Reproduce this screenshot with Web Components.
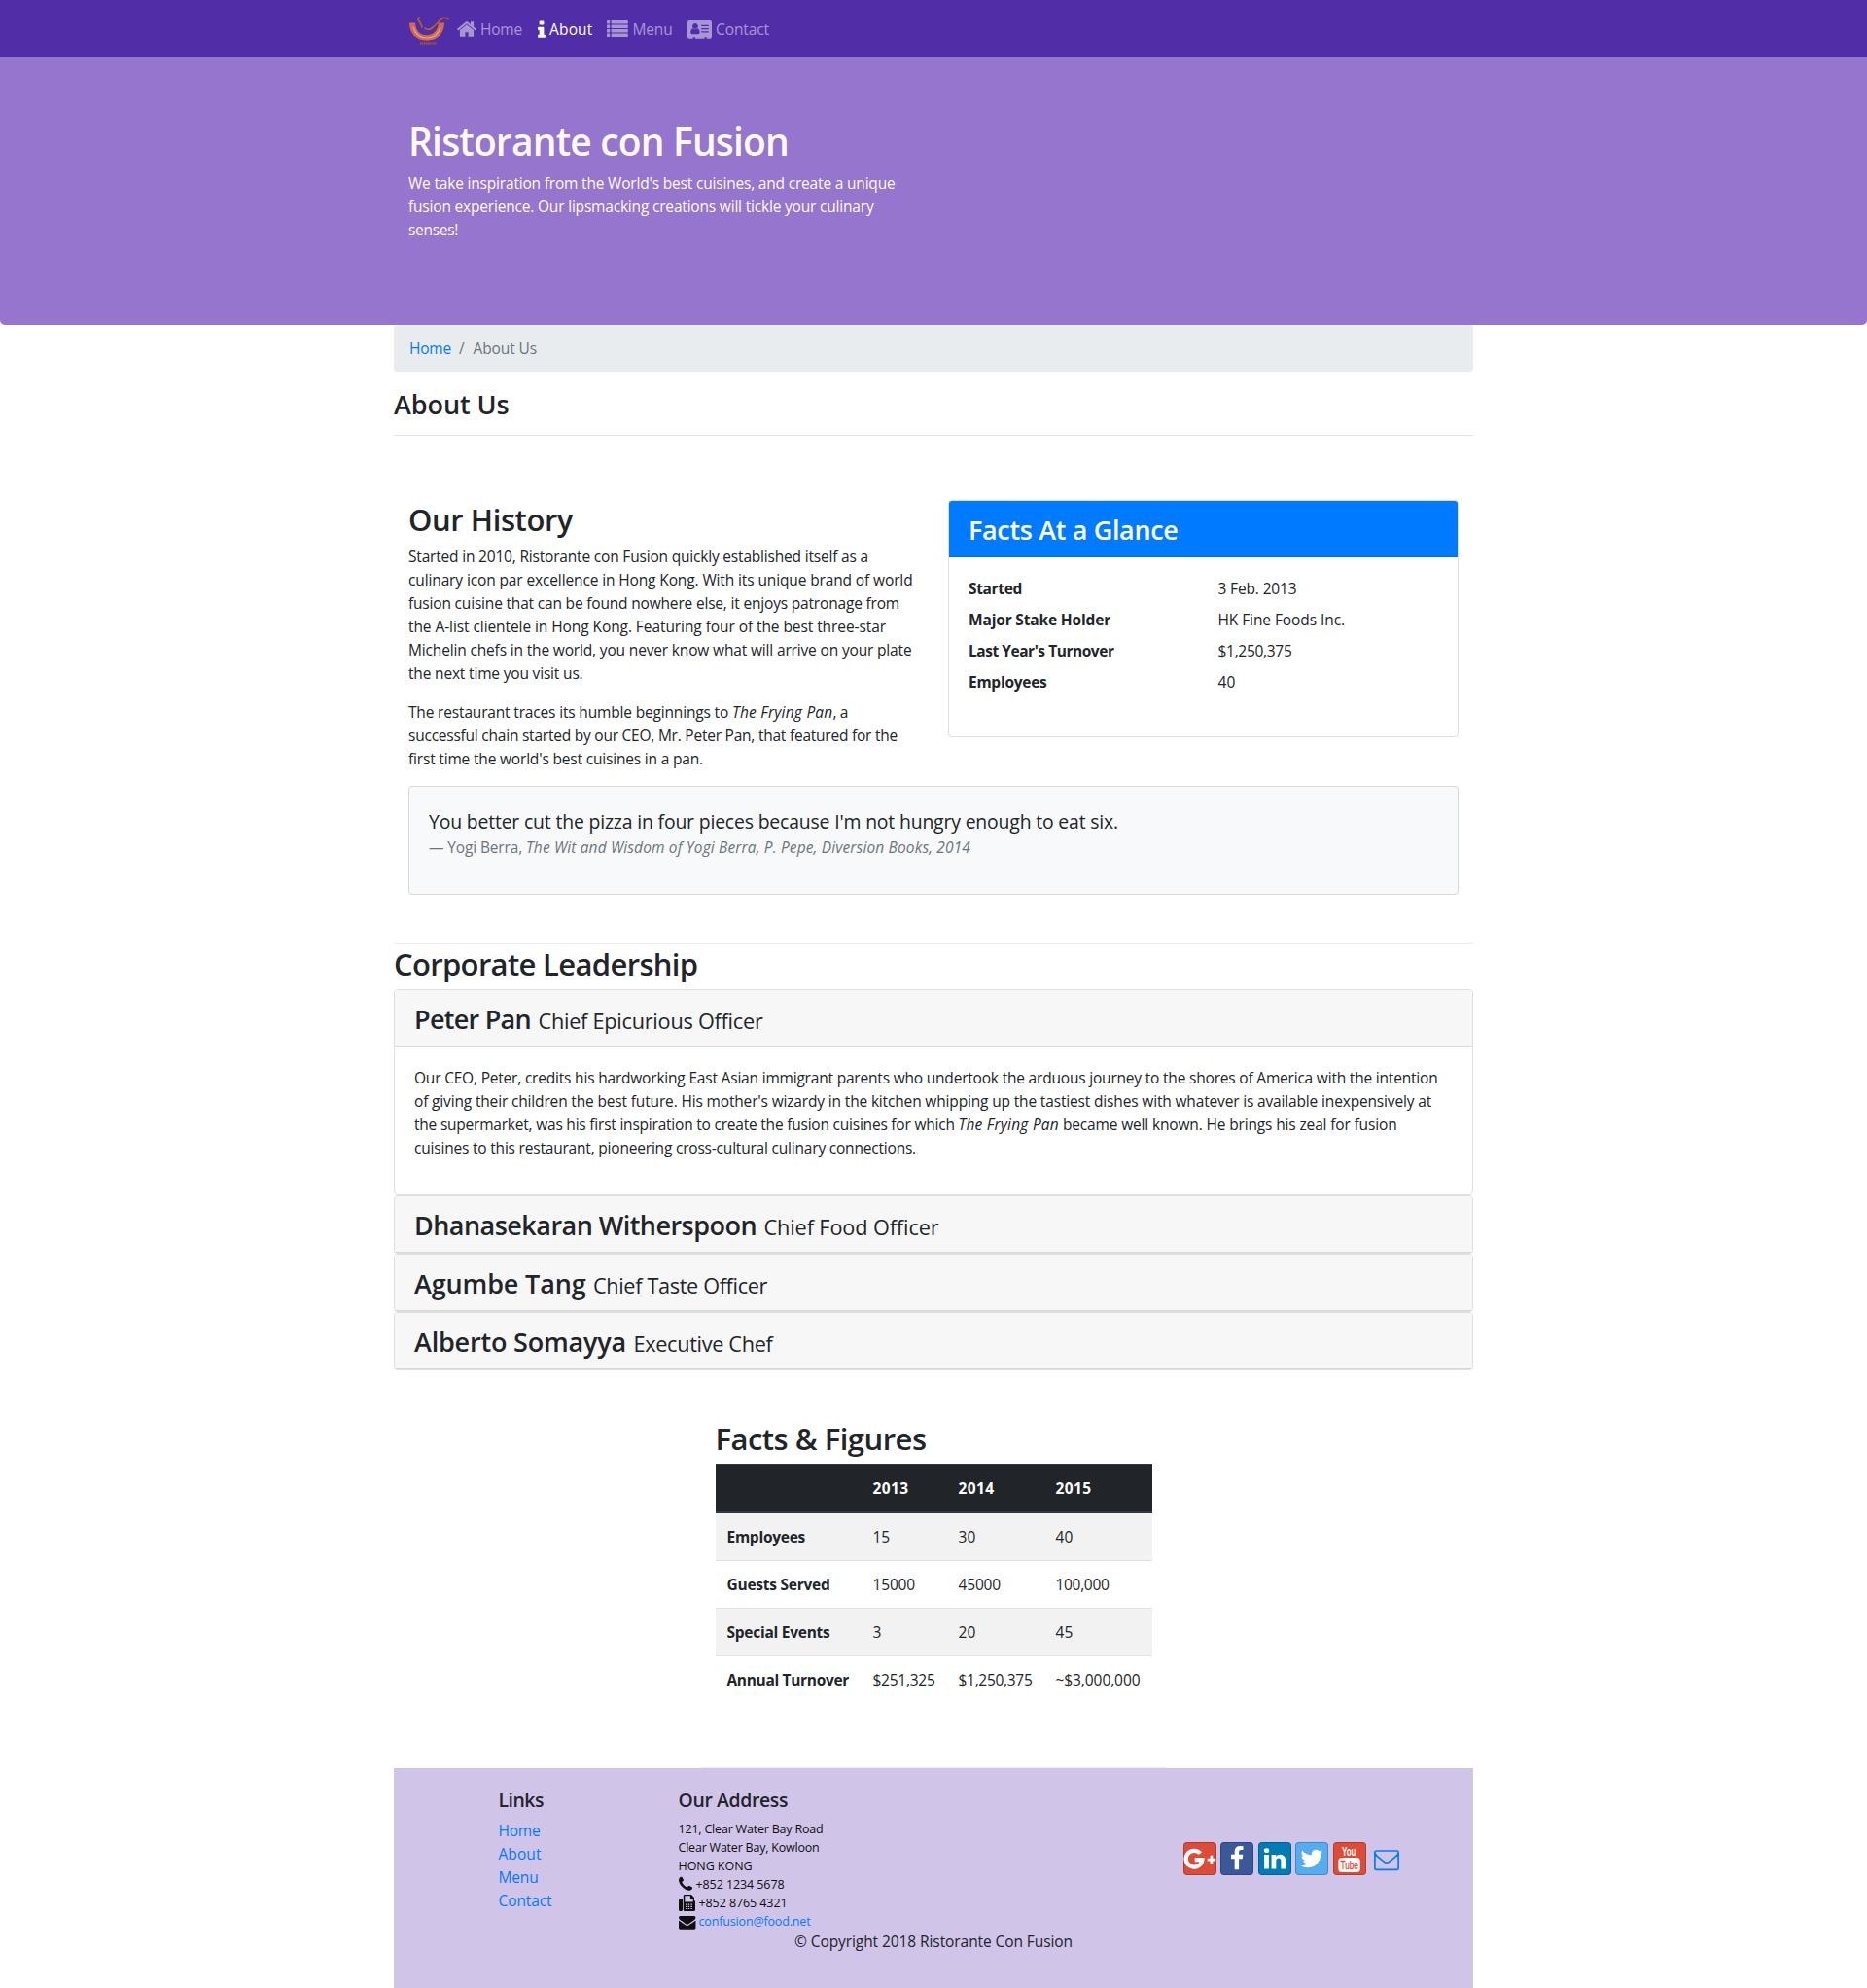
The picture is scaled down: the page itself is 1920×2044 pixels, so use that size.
<!DOCTYPE html>
<html lang="en">
<head>
<meta charset="utf-8">
<title>Ristorante Con Fusion: About Us</title>
<style>
html,body{margin:0;padding:0}
body{background:#fff;color:#212529;font:400 15.5px/24px "Open Sans","Noto Sans",sans-serif;height:2044px;overflow:hidden}
</style>
</head>
<body>
<about-page></about-page>
<script>
const base = `
*{box-sizing:border-box}
h1,h2,h3,h5,p,ul,dl,dd,dt,table{margin:0;padding:0}
h2,h3,h5{font-weight:600}
h2{font-size:31px;line-height:38px;height:38px;padding-top:1px;margin-bottom:8px}
h3{font-size:27px;line-height:33px}
p{margin-bottom:16px}
a{color:#007bff;text-decoration:none}
fit-text.line,.mixed{display:block}
.mixed{display:flex}
`;
function element(name, css, html) {
  customElements.define(name, class extends HTMLElement {
    constructor() {
      super();
      this.attachShadow({mode: 'open'}).innerHTML = `<style>${base}${css}</style>${html}`;
    }
  });
}

const icons = {
  home: ['0 0 1792 1792', '<path d="M1472 992v480q0 26-19 45t-45 19h-384v-384h-256v384h-384q-26 0-45-19t-19-45v-480q0-1 .5-3t.5-3l575-474 575 474q1 2 1 6zm223-69l-62 74q-8 9-21 11h-3q-13 0-21-7l-692-577-692 577q-12 8-24 7-13-2-21-11l-62-74q-8-10-7-23.5t11-21.5l719-599q32-26 76-26t76 26l244 204v-195q0-14 9-23t23-9h192q14 0 23 9t9 23v408l219 182q10 8 11 21.5t-7 23.5z"/>'],
  info: ['576 0 640 1792', '<path d="M1216 1344v128q0 26-19 45t-45 19h-512q-26 0-45-19t-19-45v-128q0-26 19-45t45-19h64v-384h-64q-26 0-45-19t-19-45v-128q0-26 19-45t45-19h384q26 0 45 19t19 45v576h64q26 0 45 19t19 45zm-128-1152v192q0 26-19 45t-45 19h-256q-26 0-45-19t-19-45v-192q0-26 19-45t45-19h256q26 0 45 19t19 45z"/>'],
  list: ['0 0 22 17', [0, 4.5, 9, 13.5].map(y => `<rect y="${y}" width="3.2" height="3.4" rx=".4"/><rect x="4.6" y="${y}" width="17.2" height="3.4" rx=".4"/>`).join('')],
  card: ['0 0 25 19', '<path fill-rule="evenodd" d="M2 0h21a2 2 0 0 1 2 2v14.7a2 2 0 0 1-2 2h-3.200v-1.500h-2.400v1.500H8v-1.500H5.600v1.500H2a2 2 0 0 1-2-2V2a2 2 0 0 1 2-2zM3.300 12.500q0 1.700 1.400 1.700h6.500q1.400 0 1.400-1.700c0-2.200-.6-4-2.300-4-1 .9-3.700.9-4.700 0-1.700 0-2.300 1.800-2.300 4zM7.950 3.100a2.900 2.900 0 0 0-2.200 4.800c1.200 1.200 3.200 1.200 4.400 0A2.900 2.900 0 0 0 7.950 3.100zM14.200 4.700v1.200h7.600V4.700zM14.200 8v1.200h7.600V8zM14.200 11.300v1.200h7.600v-1.200z"/>'],
  phone: ['192 256 1408 1408', '<path d="M1600 1240q0 27-10 70.5t-21 68.5q-21 50-122 106-94 51-186 51-27 0-52.500-3.500t-57.500-12.500-47.500-14.500-55.500-20.500-49-18q-98-35-175-83-128-79-264.500-215.500t-215.500-264.500q-48-77-83-175-3-9-18-49t-20.500-55.500-14.500-47.500-12.500-57.500-3.500-52.500q0-92 51-186 56-101 106-122 25-11 68.500-21t70.500-10q14 0 21 3 18 6 53 76 11 19 30 54t35 63.500 31 53.500q3 4 17.500 25t21.500 35.500 7 28.500q0 20-28.500 50t-62 55-62 53-28.500 46q0 9 5 22.500t8.500 20.500 14 24 11.500 19q76 137 174 235t235 174q2 1 19 11.500t24 14 20.500 8.500 22.500 5q18 0 46-28.500t53-62 55-62 50-28.500q14 0 28.500 7t35.500 21.500 25 17.500q25 15 53.500 31t63.500 35 54 30q70 35 76 53 3 7 3 21z"/>'],
  fax: ['0 0 17 17', '<path fill-rule="evenodd" d="M1.500 4h1.300a1.200 1.200 0 0 1 1.200 1.200v10.300A1.500 1.500 0 0 1 2.500 17h-1A1.500 1.500 0 0 1 0 15.500v-10A1.500 1.500 0 0 1 1.500 4zM6 0h7l3 3v3a1.500 1.500 0 0 1 1 1.500v8a1.500 1.500 0 0 1-1.500 1.500H6.300A1.500 1.500 0 0 1 4.800 15.500V1.200A1.200 1.200 0 0 1 6 0zM6.300 1.300v6.200h8.400V4.200h-2.800V1.300zM7 9.500v1.200h1.500V9.500zm2.700 0v1.200h1.500V9.500zm2.700 0v1.200h1.500V9.500zM7 11.700v1.200h1.500v-1.200zm2.700 0v1.200h1.500v-1.200zm2.700 0v1.200h1.500v-1.200zM7 13.900v1.200h1.500v-1.200zm2.700 0v1.200h1.500v-1.200zm2.700 0v1.200h1.500v-1.200z"/>'],
  mail: ['0 256 1792 1408', '<path d="M1792 710v794q0 66-47 113t-113 47h-1472q-66 0-113-47t-47-113v-794q44 49 101 87 362 246 497 345 57 42 92.500 65.500t94.500 48 110 24.500h2q51 0 110-24.500t94.500-48 92.500-65.500q170-123 498-345 57-39 100-87zm0-294q0 79-49 151t-122 123q-376 261-468 325-10 7-42.500 31t-54 38.500-52 32.500-57.500 27-50 9h-2q-23 0-50-9t-57.500-27-52-32.500-54-38.500-42.500-31q-91-64-262-182.500t-205-142.500q-62-42-117-115.500t-55-136.500q0-78 41.500-130t118.500-52h1472q65 0 112.500 47t47.500 113z"/>'],
  envelope: ['0 0 27 22', '<path fill="none" stroke="currentColor" stroke-width="1.700" stroke-linejoin="round" d="M2.400 1h21.200a1.500 1.500 0 0 1 1.500 1.500v16.400a1.500 1.500 0 0 1-1.500 1.500H2.400A1.500 1.500 0 0 1 .9 18.900V2.500A1.500 1.500 0 0 1 2.400 1zM1 3.200c.6 2 2 3.200 3.600 4.400l5.600 4.500c1.900 1.500 3.700 1.500 5.600 0l5.600-4.500C23 6.400 24.400 5.200 25 3.200"/>'],
  google: ['0 0 34 34', '<path fill="none" stroke="#fff" stroke-width="4.200" d="M17.400 11.700A8.400 8.400 0 1 0 19.400 18.200H11.700"/><path d="M27.600 13.800h2.700v2.900h3v2.700h-3v2.900h-2.700v-2.900h-2.900v-2.700h2.900z"/>'],
  facebook: ['0 0 1792 1792', '<path d="M1343 12v264h-157q-86 0-116 36t-30 108v189h293l-39 296h-254v759h-306v-759h-255v-296h255v-218q0-186 104-288.500t277-102.500q147 0 228 12z"/>'],
  linkedin: ['0 0 1792 1792', '<path d="M477 625v991h-330v-991h330zm21-306q1 73-50.500 122t-135.500 49h-2q-82 0-132-49t-50-122q0-74 51.500-122.500t134.500-48.500 133 48.500 51 122.500zm1166 729v568h-329v-530q0-105-40.500-164.500t-126.500-59.500q-63 0-105.500 34.500t-63.500 85.500q-11 30-11 81v553h-329q2-399 2-647t-1-296l-1-48h329v144h-2q20-32 41-56t56.500-52 87-43.500 114.500-15.500q171 0 275 113.500t104 332.500z"/>'],
  twitter: ['0 0 1792 1792', '<path d="M1684 408q-67 98-162 167 1 14 1 42 0 130-38 259.500t-115.500 248.500-184.500 210.500-258 146-323 54.500q-271 0-496-145 35 4 78 4 225 0 401-138-105-2-188-64.500t-114-159.500q33 5 61 5 43 0 85-11-112-23-185.500-111.500t-73.500-205.500v-4q68 38 146 41-66-44-105-115t-39-154q0-88 44-163 121 149 294.500 238.500t371.500 99.500q-8-38-8-74 0-134 94.500-228.500t228.500-94.500q140 0 236 102 109-21 205-78-37 115-142 178 93-10 186-50z"/>'],
  youtube: ['0 0 34 34', '<g font-family="Liberation Sans Narrow, Liberation Sans" font-size="12.200"><text x="9" y="13.900" font-weight="700" textLength="14.500" lengthAdjust="spacingAndGlyphs">You</text><rect x="5.400" y="16" width="22.400" height="15" rx="3.500"/><text x="7.500" y="28.400" font-weight="400" fill="#dd4b39" stroke="#dd4b39" stroke-width=".3" textLength="18.400" lengthAdjust="spacingAndGlyphs">Tube</text></g>'],
  logo: ['0 0 41 30', '<path fill="#d06a55" d="M0 6.500h6c.6 8.500 5 12.700 11.500 12.700S29.300 15 30 6.500h6C35.800 17.500 29 24.700 18 24.700S.2 17.500 0 6.500z"/><path fill="none" stroke="#e5a766" stroke-width="1.200" d="M4 11c2 7.500 7 11 14 11s12-3.500 14-11"/><path fill="none" stroke="#ad6430" stroke-width="1.700" stroke-linecap="round" d="M10.500 1c-2 1.500-1.800 3.500.3 4.700L13 11M40 2.600C36 .3 33.500 1 30.500 5L25 10.500q-5.500 5-9 1.500"/><path stroke="#a9553f" stroke-width="2.600" stroke-dasharray="1.400 .5" stroke-opacity=".85" d="M11 27.500h17"/>']
};
customElements.define('ui-icon', class extends HTMLElement {
  connectedCallback() {
    const [box, body] = icons[this.getAttribute('name')];
    const root = this.shadowRoot || this.attachShadow({mode: 'open'});
    root.innerHTML = `<style>:host{display:inline-block;flex:none}svg{display:block;width:100%;height:100%;overflow:visible}</style><svg viewBox="${box}" fill="currentColor" aria-hidden="true">${body}</svg>`;
  }
});

element('nav-link', `
:host{display:flex;align-items:flex-start;color:rgba(255,255,255,.5);height:24px}
:host([active]){color:#fff}
`, `<slot></slot>`);

element('site-nav', `
:host{display:block;background:#512da8;height:59px}
nav{width:1110px;margin:0 auto;padding:18px 16px 0;display:flex;align-items:flex-start}
.logo{width:41px;height:30px;margin:-1px 8px 0 0}
`, `<nav>
<ui-icon class="logo" name="logo"></ui-icon>
<nav-link style="width:83px"><ui-icon name="home" style="width:22px;height:22px;margin:1px 3px 0 -1px"></ui-icon><fit-text w="43">Home</fit-text></nav-link>
<nav-link active style="width:71px"><ui-icon name="info" style="width:8px;height:22px;margin:2px 4px 0 0"></ui-icon><fit-text w="44.500">About</fit-text></nav-link>
<nav-link style="width:83px"><ui-icon name="list" style="width:22px;height:17px;margin:3px 4.500px 0 0"></ui-icon><fit-text w="41">Menu</fit-text></nav-link>
<nav-link><ui-icon name="card" style="width:25px;height:19px;margin:3px 4px 0 0"></ui-icon><fit-text w="55">Contact</fit-text></nav-link>
</nav>`);

element('site-hero', `
:host{display:block;background:#9575cd;color:floralwhite;height:275px;border-radius:0 0 5px 5px}
div{width:1110px;margin:0 auto;padding:62px 15px 0}
h1{font-size:39px;line-height:48px;font-weight:600;margin-bottom:7px}
`, `<div><h1><fit-text w="391">Ristorante con Fusion</fit-text></h1>
<p><fit-text class="line" w="500.500">We take inspiration from the World's best cuisines, and create a unique</fit-text>
<fit-text class="line" w="478.500">fusion experience. Our lipsmacking creations will tickle your culinary</fit-text>
<fit-text class="line" w="51">senses!</fit-text></p></div>`);

element('bread-crumb', `
:host{display:flex;background:#e9ecef;border-radius:4px;height:48px;padding:12px 16px;color:#6c757d}
span{width:22.500px;padding-left:8px}
`, `<a><fit-text w="43">Home</fit-text></a><span>/</span><fit-text w="65.500">About Us</fit-text>`);

element('page-title', `
:host{display:block;padding-top:17px}
h3{height:49px;border-bottom:1px solid #e5e5e5}
`, `<h3><slot></slot></h3>`);

element('our-history', `:host{display:block;width:540px}`, `
<h2><fit-text w="169">Our History</fit-text></h2>
<p><fit-text class="line" w="473">Started in 2010, Ristorante con Fusion quickly established itself as a</fit-text>
<fit-text class="line" w="518.500">culinary icon par excellence in Hong Kong. With its unique brand of world</fit-text>
<fit-text class="line" w="505">fusion cuisine that can be found nowhere else, it enjoys patronage from</fit-text>
<fit-text class="line" w="491">the A-list clientele in Hong Kong. Featuring four of the best three-star</fit-text>
<fit-text class="line" w="517.500">Michelin chefs in the world, you never know what will arrive on your plate</fit-text>
<fit-text class="line" w="179.500">the next time you visit us.</fit-text></p>
<p><span class="mixed"><fit-text w="333">The restaurant traces its humble beginnings to </fit-text><em><fit-text w="103.500">The Frying Pan</fit-text></em><fit-text w="15.500">, a</fit-text></span>
<fit-text class="line" w="503">successful chain started by our CEO, Mr. Peter Pan, that featured for the</fit-text>
<fit-text class="line" w="303">first time the world's best cuisines in a pan.</fit-text></p>`);

element('facts-card', `
:host{display:block;width:525px;height:244px;border:1px solid rgba(0,0,0,.125);border-radius:4px;margin-left:15px}
h3{background:#007bff;color:#fff;padding:13px 20px 11px;border-bottom:1px solid #006ddf;border-radius:3px 3px 0 0}
dl{padding:20px;display:grid;grid-template-columns:256.500px 1fr;row-gap:8px}
dt{font-weight:700}
`, `<h3><fit-text w="215.500">Facts At a Glance</fit-text></h3>
<dl><dt><fit-text w="55">Started</fit-text></dt><dd><fit-text w="81">3 Feb. 2013</fit-text></dd>
<dt><fit-text w="146">Major Stake Holder</fit-text></dt><dd><fit-text w="130.500">HK Fine Foods Inc.</fit-text></dd>
<dt><fit-text w="149.500">Last Year's Turnover</fit-text></dt><dd><fit-text w="76">$1,250,375</fit-text></dd>
<dt><fit-text w="80.500">Employees</fit-text></dt><dd><fit-text w="18">40</fit-text></dd></dl>`);

element('quote-card', `
:host{display:block;height:112px;border:1px solid rgba(0,0,0,.125);border-radius:4px;background:#f8f9fa;padding:21px 20px 0}
.q{font-size:19.400px;line-height:30px;height:29px}
.by{color:#6c757d}
`, `<fit-text class="line q" w="709">You better cut the pizza in four pieces because I'm not hungry enough to eat six.</fit-text>
<div class="mixed by"><fit-text w="100">— Yogi Berra, </fit-text><em><fit-text w="457">The Wit and Wisdom of Yogi Berra, P. Pepe, Diversion Books, 2014</fit-text></em></div>`);

element('leader-card', `
:host{display:block;border:1px solid #dfdfdf;border-radius:4px}
header{height:58px;background:#f7f7f7;border-bottom:1px solid #d9d9d9;border-radius:3px 3px 0 0;padding:13px 20px 0}
h3{display:flex;align-items:baseline;gap:7.500px;height:33px}
::slotted([slot=role]){font-size:21.700px;font-weight:400}
.body{padding:20px 20px 36px;display:none}
:host([open]) .body{display:block}
::slotted(.line){display:block}
`, `<header><h3><slot name="name"></slot><slot name="role"></slot></h3></header><div class="body"><slot></slot></div>`);

element('figures-table', `
:host{display:block;width:479px;margin:0 auto;padding:50px 15px 66px;border-bottom:1px solid #eee}
table{border-collapse:separate;border-spacing:0;table-layout:fixed;width:449px}
td,th{height:49px;padding:12px 0 12px 12px;text-align:left;border-top:1px solid #dee2e6;white-space:nowrap}
thead th{height:51px;background:#212529;color:#fff;border-top:1px solid #32383e;border-bottom:2px solid #32383e}
tbody tr:first-child>*{border-top:0;height:48px}
tbody tr:nth-child(odd)>*{background:#f2f2f2}
`, `<h2><fit-text w="217">Facts &amp; Figures</fit-text></h2>
<table><colgroup><col style="width:150px"><col style="width:88px"><col style="width:100px"><col style="width:111px"></colgroup>
<thead><tr><th></th><th><fit-text w="37">2013</fit-text></th><th><fit-text w="37">2014</fit-text></th><th><fit-text w="37">2015</fit-text></th></tr></thead>
<tbody>
<tr><th><fit-text w="80.500">Employees</fit-text></th><td><fit-text w="17.500">15</fit-text></td><td><fit-text w="18">30</fit-text></td><td><fit-text w="18">40</fit-text></td></tr>
<tr><th><fit-text w="106">Guests Served</fit-text></th><td><fit-text w="43.500">15000</fit-text></td><td><fit-text w="43.500">45000</fit-text></td><td><fit-text w="55">100,000</fit-text></td></tr>
<tr><th><fit-text w="106">Special Events</fit-text></th><td><fit-text w="9">3</fit-text></td><td><fit-text w="18">20</fit-text></td><td><fit-text w="18">45</fit-text></td></tr>
<tr><th><fit-text w="125.500">Annual Turnover</fit-text></th><td><fit-text w="64">$251,325</fit-text></td><td><fit-text w="76">$1,250,375</fit-text></td><td><fit-text w="87">~$3,000,000</fit-text></td></tr>
</tbody></table>`);

element('social-button', `
:host{display:flex;align-items:center;justify-content:center;width:34px;height:34px;border-radius:4px;border:1px solid rgba(0,0,0,.2);color:#fff}
`, `<slot></slot>`);

element('site-footer', `
:host{display:block;background:#d1c4e9;height:226px;padding:21px 0 0 107.500px}
.cols{display:flex;height:145px}
.links{width:185px}
.links h5{margin-bottom:7px}
.addr{width:519px;color:#0f0f0f;font-size:12.500px;line-height:19px}
h5{font-size:19.400px;line-height:24px;margin-bottom:8px;color:#212529}
.row{display:flex;height:19px}
.social{display:flex;gap:4.500px;align-items:center;height:34px;margin-top:55px}
.copy{text-align:center;margin-left:-107.500px}
`, `<div class="cols">
<div class="links"><h5><fit-text w="46.500">Links</fit-text></h5>
<a><fit-text class="line" w="43">Home</fit-text><fit-text class="line" w="44">About</fit-text><fit-text class="line" w="41">Menu</fit-text><fit-text class="line" w="55">Contact</fit-text></a></div>
<div class="addr"><h5><fit-text w="112.500">Our Address</fit-text></h5>
<fit-text class="line" w="149">121, Clear Water Bay Road</fit-text>
<fit-text class="line" w="145">Clear Water Bay, Kowloon</fit-text>
<fit-text class="line" w="76">HONG KONG</fit-text>
<div class="row"><ui-icon name="phone" style="width:14px;height:14px;margin:3px 4px 0 0"></ui-icon><fit-text w="91">+852 1234 5678</fit-text></div>
<div class="row"><ui-icon name="fax" style="width:17px;height:17px;margin:1px 4px 0 0"></ui-icon><fit-text w="91">+852 8765 4321</fit-text></div>
<div class="row"><ui-icon name="mail" style="width:17.500px;height:13.700px;margin:4px 3.500px 0 0"></ui-icon><a><fit-text w="115">confusion@food.net</fit-text></a></div></div>
<div class="social">
<social-button style="background-color:#dd4b39"><ui-icon name="google" style="width:34px;height:34px;margin:0 -1px"></ui-icon></social-button>
<social-button style="background-color:#3b5998"><ui-icon name="facebook" style="width:26px;height:26px"></ui-icon></social-button>
<social-button style="background-color:#007bb6"><ui-icon name="linkedin" style="width:26px;height:26px"></ui-icon></social-button>
<social-button style="background-color:#55acee"><ui-icon name="twitter" style="width:26px;height:26px"></ui-icon></social-button>
<social-button style="background-color:#dd4b39"><ui-icon name="youtube" style="width:34px;height:34px;margin:0 -1px"></ui-icon></social-button>
<a><ui-icon name="envelope" style="width:27px;height:22px;margin:9px 0 0 4px"></ui-icon></a>
</div></div>
<div class="copy"><fit-text w="286">© Copyright 2018 Ristorante Con Fusion</fit-text></div>`);

element('about-page', `
:host{display:block}
main{width:1110px;margin:0 auto}
.row{display:flex;padding:66px 15px 0}
quote-card{margin:0 15px}
.rule{margin-top:50px;border-top:1px solid #eee}
`, `<site-nav></site-nav><site-hero></site-hero>
<main>
<bread-crumb></bread-crumb>
<page-title><fit-text w="118.500">About Us</fit-text></page-title>
<div class="row"><our-history></our-history><facts-card></facts-card></div>
<quote-card></quote-card>
<section class="rule"><h2><fit-text w="312.500">Corporate Leadership</fit-text></h2>
<leader-card open><fit-text slot="name" w="120">Peter Pan</fit-text><fit-text slot="role" w="231">Chief Epicurious Officer</fit-text>
<fit-text class="line" w="1052.500">Our CEO, Peter, credits his hardworking East Asian immigrant parents who undertook the arduous journey to the shores of America with the intention</fit-text>
<fit-text class="line" w="1046">of giving their children the best future. His mother's wizardy in the kitchen whipping up the tastiest dishes with whatever is available inexpensively at</fit-text>
<div class="mixed"><fit-text w="559.500">the supermarket, was his first inspiration to create the fusion cuisines for which </fit-text><em><fit-text w="103.500">The Frying Pan</fit-text></em><fit-text w="347.500"> became well known. He brings his zeal for fusion</fit-text></div>
<fit-text class="line" w="516">cuisines to this restaurant, pioneering cross-cultural culinary connections.</fit-text></leader-card>
<leader-card><fit-text slot="name" w="352">Dhanasekaran Witherspoon</fit-text><fit-text slot="role" w="180">Chief Food Officer</fit-text></leader-card>
<leader-card><fit-text slot="name" w="176.500">Agumbe Tang</fit-text><fit-text slot="role" w="179">Chief Taste Officer</fit-text></leader-card>
<leader-card><fit-text slot="name" w="218">Alberto Somayya</fit-text><fit-text slot="role" w="143">Executive Chef</fit-text></leader-card>
</section>
<figures-table></figures-table>
<site-footer></site-footer>
</main>`);

/* Text run that tracks itself to the width given in its w attribute. */
customElements.define('fit-text', class extends HTMLElement {
  connectedCallback() {
    if (!this.shadowRoot) this.attachShadow({mode: 'open'}).innerHTML =
      '<style>:host{display:inline-block;white-space:pre;font-kerning:normal;font-variant-ligatures:none}span{display:inline-block}</style><span><slot></slot></span>';
    const span = this.shadowRoot.querySelector('span');
    const n = this.textContent.length;
    this.style.letterSpacing = '0px';
    const natural = span.getBoundingClientRect().width;
    this.style.letterSpacing = ((this.getAttribute('w') - natural) / n).toFixed(4) + 'px';
  }
});
</script>
</body>
</html>
